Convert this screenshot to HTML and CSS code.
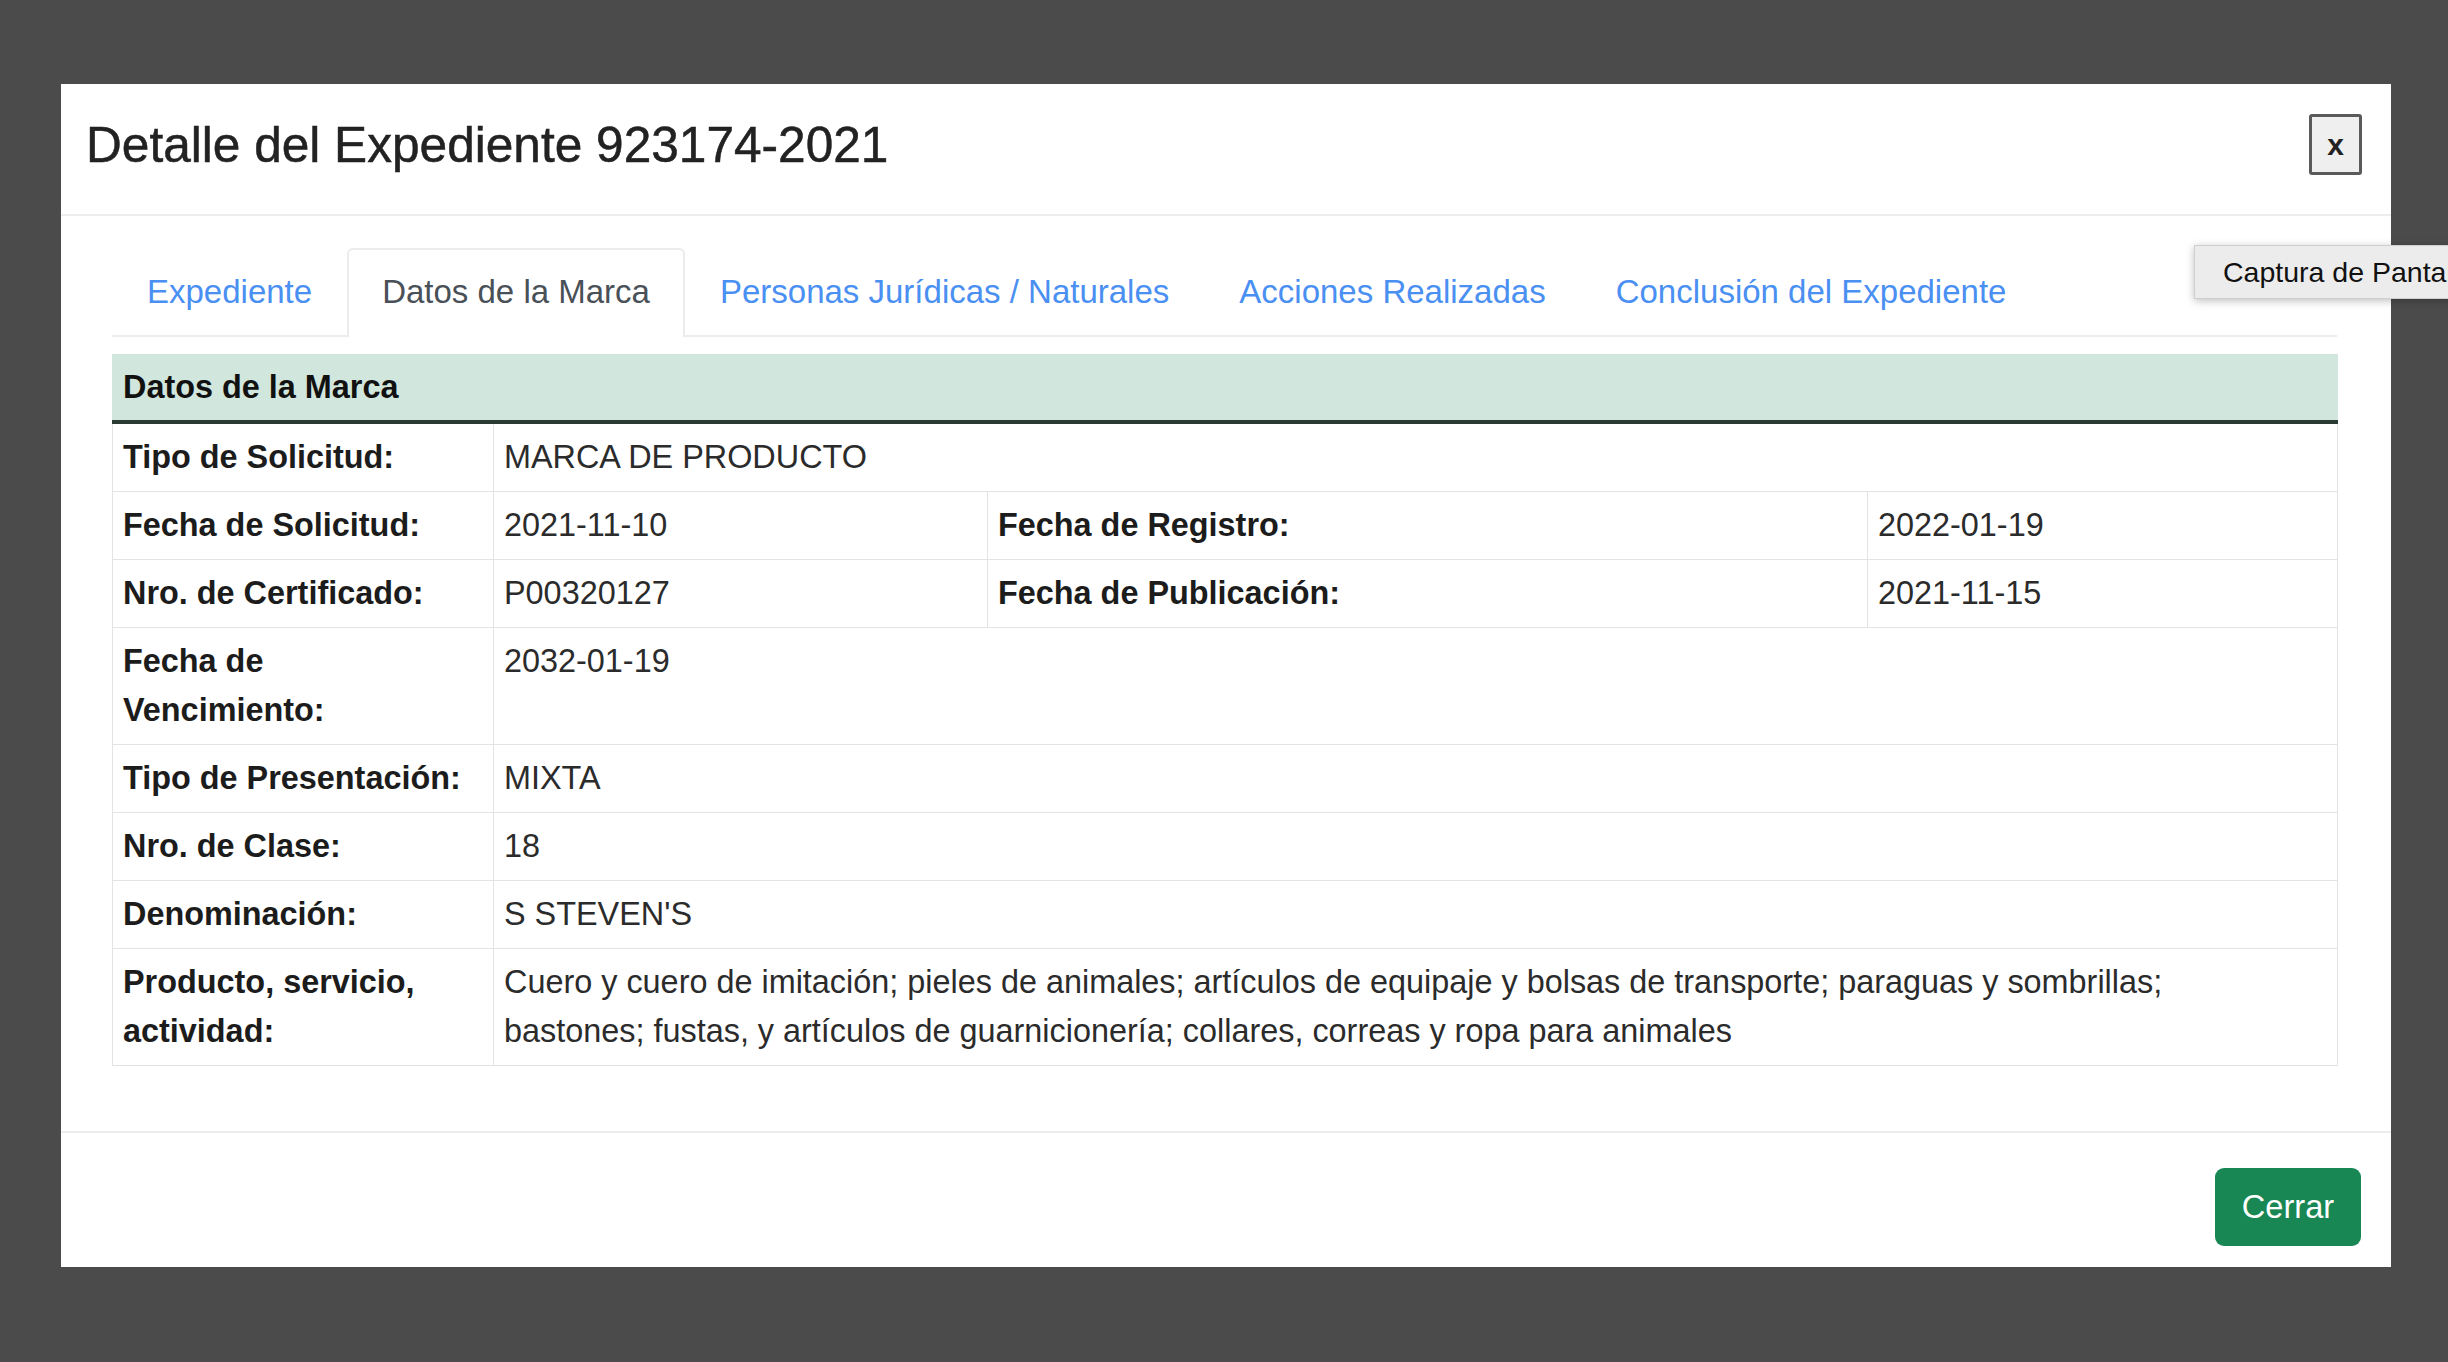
FILE: index.html
```html
<!DOCTYPE html>
<html lang="es">
<head>
    <meta charset="UTF-8">
    <meta name="viewport" content="width=device-width, initial-scale=1.0">
    <title>Detalle del Expediente 923174-2021</title>
    <link rel="stylesheet" href="styles.css">
</head>
<body>
    <div class="modal">
        <header class="modal-header">
            <h4 class="modal-title">Detalle del Expediente 923174-2021</h4>
            <button class="btn-close" type="button">x</button>
        </header>

        <section class="modal-body">
            <ul class="nav-tabs">
                <li><a class="nav-link" href="#">Expediente</a></li>
                <li><a class="nav-link active" href="#">Datos de la Marca</a></li>
                <li><a class="nav-link" href="#">Personas Jurídicas / Naturales</a></li>
                <li><a class="nav-link" href="#">Acciones Realizadas</a></li>
                <li><a class="nav-link" href="#">Conclusión del Expediente</a></li>
            </ul>

            <table class="tabla">
                <colgroup>
                    <col class="c-label">
                    <col class="c-valor">
                    <col class="c-label2">
                    <col class="c-valor2">
                </colgroup>
                <thead>
                    <tr>
                        <th colspan="4">Datos de la Marca</th>
                    </tr>
                </thead>
                <tbody>
                    <tr>
                        <td class="lbl">Tipo de Solicitud:</td>
                        <td colspan="3">MARCA DE PRODUCTO</td>
                    </tr>
                    <tr>
                        <td class="lbl">Fecha de Solicitud:</td>
                        <td>2021-11-10</td>
                        <td class="lbl">Fecha de Registro:</td>
                        <td>2022-01-19</td>
                    </tr>
                    <tr>
                        <td class="lbl">Nro. de Certificado:</td>
                        <td>P00320127</td>
                        <td class="lbl">Fecha de Publicación:</td>
                        <td>2021-11-15</td>
                    </tr>
                    <tr>
                        <td class="lbl">Fecha de Vencimiento:</td>
                        <td colspan="3">2032-01-19</td>
                    </tr>
                    <tr>
                        <td class="lbl">Tipo de Presentación:</td>
                        <td colspan="3">MIXTA</td>
                    </tr>
                    <tr>
                        <td class="lbl">Nro. de Clase:</td>
                        <td colspan="3">18</td>
                    </tr>
                    <tr>
                        <td class="lbl">Denominación:</td>
                        <td colspan="3">S STEVEN'S</td>
                    </tr>
                    <tr>
                        <td class="lbl">Producto, servicio, actividad:</td>
                        <td class="texto-largo" colspan="3">Cuero y cuero de imitación; pieles de animales; artículos de equipaje y bolsas de transporte; paraguas y sombrillas; bastones; fustas, y artículos de guarnicionería; collares, correas y ropa para animales</td>
                    </tr>
                </tbody>
            </table>
        </section>

        <footer class="modal-footer">
            <button class="btn-success" type="button">Cerrar</button>
        </footer>
    </div>

    <div class="tooltip">Captura de Pantalla</div>
</body>
</html>
```

FILE: styles.css
```css
body {
    margin: 0;
    padding: 0;
    background-color: #4b4b4b;
    font-family: "Liberation Sans", Arial, Helvetica, sans-serif;
    font-size: 32.4px;
    line-height: 49px;
    color: #212529;
    height: 1362px;
    overflow: hidden;
}

.modal {
    width: 2330px;
    margin: 84px 0 0 61px;
    background-color: #fff;
}

.modal-header {
    display: flex;
    justify-content: space-between;
    align-items: flex-start;
    padding: 0 29px 0 25px;
    border-bottom: 2px solid #ededed;
}

.modal-title {
    margin: 0;
    padding: 33px 0 40px;
    font-size: 49.6px;
    line-height: 57px;
    font-weight: 400;
    color: #222;
    -webkit-text-stroke: 0.5px #222;
}

.btn-close {
    margin-top: 30px;
    width: 53px;
    height: 61px;
    padding: 0;
    background-color: #efefef;
    border: 3px solid #5a5a5a;
    border-radius: 3px;
    font-family: "Liberation Sans", Arial, sans-serif;
    font-size: 30px;
    font-weight: 700;
    color: #222;
    cursor: pointer;
}

.modal-body {
    padding: 32px 54px 65px 51px;
}

.nav-tabs {
    display: flex;
    margin: 0;
    padding: 0;
    list-style: none;
    border-bottom: 2px solid #ececec;
}

.nav-link {
    display: block;
    margin-bottom: -2px;
    padding: 17px 33px 18px 33px;
    font-size: 33px;
    line-height: 50px;
    color: #4a8ff2;
    text-decoration: none;
    border: 2px solid transparent;
    border-bottom: none;
    border-radius: 6px 6px 0 0;
}

.nav-link.active {
    color: #495057;
    background-color: #fff;
    border-color: #ececec;
    padding-bottom: 20px;
}

.tabla {
    width: 2225px;
    margin-top: 17px;
    border-collapse: collapse;
    table-layout: fixed;
}

.c-label { width: 381px; }
.c-valor { width: 494px; }
.c-label2 { width: 880px; }
.c-valor2 { width: 470px; }

.tabla th {
    text-align: left;
    padding: 8px 10px;
    background-color: #d1e7dd;
    color: #111;
    font-weight: 700;
    border: 1px solid #d1e7dd;
    border-bottom: 4px solid #2b3b33;
}

.tabla td {
    padding: 9px 10px;
    vertical-align: top;
    border: 1px solid #e3e3e3;
    color: #2b2b2b;
}

.tabla td.lbl {
    font-weight: 700;
    color: #1c1c1c;
}

.tabla td.lbl:first-child {
    padding-right: 24px;
}

.tabla td.texto-largo {
    padding-right: 90px;
}

.modal-footer {
    display: flex;
    justify-content: flex-end;
    padding: 35px 30px 21px;
    border-top: 2px solid #ededed;
}

.btn-success {
    width: 146px;
    height: 78px;
    padding: 0;
    background-color: #198754;
    color: #fff;
    border: none;
    border-radius: 9px;
    font-family: "Liberation Sans", Arial, sans-serif;
    font-size: 32.6px;
    cursor: pointer;
}

.tooltip {
    position: absolute;
    top: 245px;
    left: 2194px;
    width: 280px;
    height: 52px;
    padding-left: 28px;
    background-color: #ececec;
    border: 1px solid #cfcfcf;
    box-shadow: 0 2px 8px rgba(0, 0, 0, 0.25);
    font-size: 28.5px;
    line-height: 52px;
    color: #111;
    white-space: nowrap;
}
```
